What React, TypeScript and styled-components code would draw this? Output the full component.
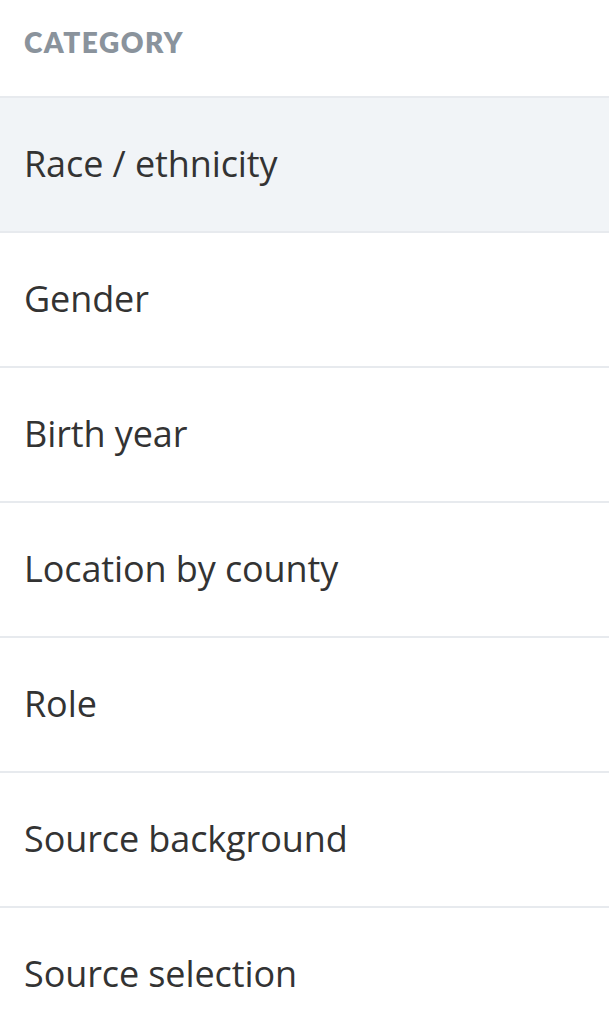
import React from "react";
import styled, { createGlobalStyle } from "styled-components";

const Global = createGlobalStyle`
  html, body { margin: 0; padding: 0; background: #ffffff; }
  * { box-sizing: border-box; }
`;

const Panel = styled.div`
  width: 609px;
  background: #ffffff;
`;

const Heading = styled.div`
  height: 96px;
  padding: 28px 24px 0;
  font-family: "Lato", "Noto Sans", sans-serif;
  font-size: 28px;
  font-weight: 800;
  letter-spacing: 1.5px;
  color: #8a939c;
  line-height: 1;
  text-transform: uppercase;
`;

const List = styled.ul`
  list-style: none;
  margin: 0;
  padding: 0;
  border-top: 2px solid #e7eaee;
`;

const Item = styled.li<{ $active?: boolean }>`
  height: 135px;
  display: flex;
  align-items: center;
  padding: 0 24px 2px;
  font-family: "Open Sans", "Noto Sans", sans-serif;
  font-size: 36px;
  letter-spacing: -0.1px;
  color: #333333;
  background: ${(p) => (p.$active ? "#f1f4f7" : "#ffffff")};
  border-bottom: 2px solid #e7eaee;
`;

const items = [
  "Race / ethnicity",
  "Gender",
  "Birth year",
  "Location by county",
  "Role",
  "Source background",
  "Source selection",
];

export default function App() {
  return (
    <>
      <Global />
      <Panel>
        <Heading>Category</Heading>
        <List>
          {items.map((t, i) => (
            <Item key={t} $active={i === 0}>
              {t}
            </Item>
          ))}
        </List>
      </Panel>
    </>
  );
}
